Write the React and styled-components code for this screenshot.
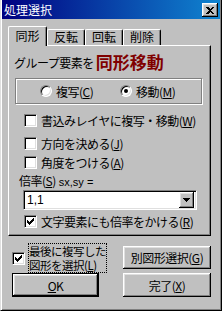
import React from 'react';
import styled, { createGlobalStyle } from 'styled-components';

const Global = createGlobalStyle`
  html, body { margin: 0; padding: 0; background: #c0c0c0; }
  body {
    font-family: "Noto Sans CJK JP", "Noto Sans", sans-serif;
    font-size: 12px;
    letter-spacing: -0.5px;
    color: #000;
  }
  u { text-decoration: underline; text-underline-offset: 1px; }
`;

const Window = styled.div`
  width: 222px;
  height: 311px;
  box-sizing: border-box;
  background: #c0c0c0;
  border-left: 1px solid #dfdfdf;
  border-right: 1px solid #000;
  border-bottom: 1px solid #000;
  padding: 0 1px 1px 1px;
  box-shadow: inset 1px 0 #fff, inset -1px -1px #808080;
  display: flex;
  flex-direction: column;
`;

const TitleBar = styled.div`
  height: 19px;
  flex: none;
  background: linear-gradient(to right, #000080, #1084d0);
  display: flex;
  align-items: center;
  padding-left: 2px;
  color: #fff;
  font-size: 12px;
  line-height: 13px;
  letter-spacing: 0;
`;

const TitleText = styled.span`
  flex: 1;
`;

const Bevel = `
  background: #c0c0c0;
  box-sizing: border-box;
  box-shadow: inset -1px -1px #000, inset 1px 1px #fff, inset -2px -2px #808080, inset 2px 2px #dfdfdf;
`;

const CloseButton = styled.div`
  ${Bevel}
  width: 16px;
  height: 14px;
  margin-right: 2px;
  margin-top: 1px;
  display: flex;
  align-items: center;
  justify-content: center;
`;

const Body = styled.div`
  flex: 1;
  padding: 7px 9px 0 6px;
  display: flex;
  flex-direction: column;
`;

const TabRow = styled.div`
  display: flex;
  align-items: flex-start;
  height: 20px;
  position: relative;
  z-index: 1;
  margin-bottom: -1px;
`;

const Tab = styled.div`
  box-sizing: border-box;
  width: ${p => p.$w}px;
  height: ${p => (p.$active ? 20 : 16)}px;
  margin-top: ${p => (p.$active ? 0 : 3)}px;
  background: #c0c0c0;
  border-top: 1px solid #fff;
  border-left: 1px solid #fff;
  border-right: 1px solid #000;
  border-radius: 2px 2px 0 0;
  box-shadow: inset -1px 0 #808080;
  display: flex;
  justify-content: center;
  padding-top: ${p => (p.$active ? 2 : 0)}px;
  font-size: 12px;
  line-height: 14px;
  letter-spacing: 0;
`;

const Panel = styled.div`
  box-sizing: border-box;
  width: 203px;
  height: 191px;
  flex: none;
  border-top: 1px solid #fff;
  border-left: 1px solid #fff;
  border-right: 1px solid #000;
  border-bottom: 1px solid #000;
  box-shadow: inset -1px -1px #808080;
  display: flex;
  flex-direction: column;
`;

const Heading = styled.div`
  margin-top: 7px;
  padding-left: 5px;
  height: 17px;
  display: flex;
  align-items: flex-end;
  white-space: nowrap;
  font-size: 12px;
  line-height: 14px;
`;

const Emph = styled.span`
  color: #800000;
  font-weight: bold;
  font-size: 17px;
  line-height: 17px;
  letter-spacing: 0;
  margin-left: 2px;
`;

const RadioGroup = styled.div`
  box-sizing: border-box;
  margin: 8px 0 0 6px;
  width: 187px;
  height: 26px;
  border: 1px solid #808080;
  box-shadow: 1px 1px 0 #fff, inset 1px 1px 0 #fff;
  display: flex;
  align-items: center;
  padding-left: 24px;
`;

const RadioItem = styled.div`
  display: flex;
  align-items: center;
  width: ${p => p.$w}px;
  white-space: nowrap;
  line-height: 13px;
`;

const RadioCircle = styled.div`
  box-sizing: border-box;
  width: 12px;
  height: 12px;
  border-radius: 50%;
  background: #fff;
  border: 1px solid;
  border-color: #808080 #fff #fff #808080;
  box-shadow: inset 1px 1px #000, inset -1px -1px #dfdfdf;
  display: flex;
  align-items: center;
  justify-content: center;
  margin-right: 4px;
  flex: none;
`;

const Dot = styled.div`
  width: 4px;
  height: 4px;
  border-radius: 50%;
  background: #000;
`;

const CheckRow = styled.div`
  display: flex;
  align-items: center;
  height: 13px;
  margin-top: ${p => p.$mt}px;
  margin-left: ${p => p.$ml ?? 15}px;
  white-space: nowrap;
  line-height: 13px;
`;

const Box = styled.div`
  box-sizing: border-box;
  width: 13px;
  height: 13px;
  background: #fff;
  border: 1px solid;
  border-color: #808080 #fff #fff #808080;
  box-shadow: inset 1px 1px #000, inset -1px -1px #dfdfdf;
  display: flex;
  align-items: center;
  justify-content: center;
  margin-right: 4px;
  flex: none;
`;

const Label = styled.div`
  margin-top: 5px;
  margin-left: 10px;
  height: 13px;
  line-height: 13px;
  white-space: nowrap;
`;

const Small = styled.span`
  font-family: "Liberation Sans", Arial, sans-serif;
  font-size: 11px;
  letter-spacing: 0;
  margin-left: 3px;
`;

const Combo = styled.div`
  box-sizing: border-box;
  margin: 3px 0 0 14px;
  width: 174px;
  height: 20px;
  background: #fff;
  border: 1px solid;
  border-color: #808080 #fff #fff #808080;
  box-shadow: inset 1px 1px #000, inset -1px -1px #dfdfdf;
  display: flex;
  align-items: center;
  padding: 2px;
`;

const ComboText = styled.span`
  flex: 1;
  font-family: "Liberation Sans", Arial, sans-serif;
  font-size: 12px;
  letter-spacing: 0;
  line-height: 14px;
  padding-left: 1px;
`;

const DropButton = styled.div`
  ${Bevel}
  width: 15px;
  height: 16px;
  display: flex;
  align-items: center;
  justify-content: center;
`;

const Footer = styled.div`
  margin-top: 7px;
  margin-left: 4px;
  display: grid;
  grid-template-columns: 87px 88px;
  grid-template-rows: 30px 24px;
  column-gap: 24px;
`;

const FooterCheck = styled.div`
  display: flex;
  align-items: center;
  white-space: nowrap;
`;

const FocusText = styled.div`
  outline: 1px dotted #000;
  font-size: 11.5px;
  line-height: 14px;
  padding: 0;
  flex: none;
`;

const Button = styled.div`
  ${Bevel}
  height: ${p => p.$h ?? 24}px;
  align-self: ${p => p.$align ?? 'stretch'};
  margin-bottom: ${p => p.$mb ?? 0}px;
  display: flex;
  align-items: center;
  justify-content: center;
  line-height: 13px;
  white-space: nowrap;
  ${p => p.$default && `
    border: 1px solid #000;
  `}
`;

const Check = () => (
  <svg width="7" height="7" viewBox="0 0 7 7" shapeRendering="crispEdges">
    <path d="M0 2h1v3H0z M1 3h1v3H1z M2 4h1v3H2z M3 3h1v3H3z M4 2h1v3H4z M5 1h1v3H5z M6 0h1v3H6z" fill="#000" />
  </svg>
);

const Arrow = () => (
  <svg width="7" height="4" viewBox="0 0 7 4" shapeRendering="crispEdges">
    <path d="M0 0h7v1H0z M1 1h5v1H1z M2 2h3v1H2z M3 3h1v1H3z" fill="#000" />
  </svg>
);

const CloseX = () => (
  <svg width="8" height="7" viewBox="0 0 8 7" shapeRendering="crispEdges">
    <path d="M0 0h2l2 2 2-2h2v1L5 3.5 8 6v1H6L4 5 2 7H0V6l3-2.5L0 1z" fill="#000" />
  </svg>
);

export default function App() {
  return (
    <>
      <Global />
      <Window>
        <TitleBar>
          <TitleText>処理選択</TitleText>
          <CloseButton><CloseX /></CloseButton>
        </TitleBar>
        <Body>
          <TabRow>
            <Tab $w={39} $active>同形</Tab>
            <Tab $w={38}>反転</Tab>
            <Tab $w={38}>回転</Tab>
            <Tab $w={38}>削除</Tab>
          </TabRow>
          <Panel>
            <Heading>グループ要素を<Emph>同形移動</Emph></Heading>
            <RadioGroup>
              <RadioItem $w={80}>
                <RadioCircle />
                複写(<u>C</u>)
              </RadioItem>
              <RadioItem $w={70}>
                <RadioCircle><Dot /></RadioCircle>
                移動(<u>M</u>)
              </RadioItem>
            </RadioGroup>
            <CheckRow $mt={10}><Box />書込みレイヤに複写・移動(<u>W</u>)</CheckRow>
            <CheckRow $mt={10}><Box />方向を決める(<u>J</u>)</CheckRow>
            <CheckRow $mt={6}><Box />角度をつける(<u>A</u>)</CheckRow>
            <Label>倍率(<u>S</u>)<Small>sx,sy =</Small></Label>
            <Combo>
              <ComboText>1,1</ComboText>
              <DropButton><Arrow /></DropButton>
            </Combo>
            <CheckRow $mt={5}><Box><Check /></Box>文字要素にも倍率をかける(<u>R</u>)</CheckRow>
          </Panel>
          <Footer>
            <FooterCheck>
              <Box><Check /></Box>
              <FocusText>最後に複写した<br />図形を選択(<u>L</u>)</FocusText>
            </FooterCheck>
            <Button $h={23} $align="end" $mb={4}>別図形選択(<u>G</u>)</Button>
            <Button $default><u>O</u>K</Button>
            <Button>完了(<u>X</u>)</Button>
          </Footer>
        </Body>
      </Window>
    </>
  );
}
